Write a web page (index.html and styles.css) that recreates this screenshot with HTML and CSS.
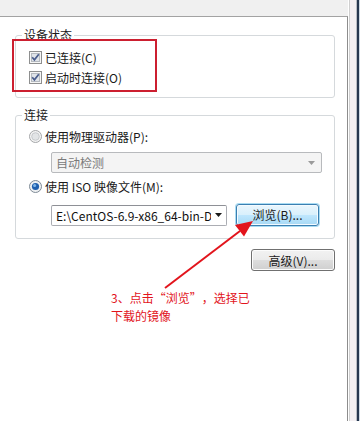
FILE: index.html
```html
<!DOCTYPE html>
<html lang="zh-CN">
<head>
  <meta charset="UTF-8">
  <meta name="viewport" content="width=device-width, initial-scale=1.0">
  <title>CD/DVD 设置</title>
  <link rel="stylesheet" href="styles.css">
</head>
<body>
  <div class="shell">
    <div class="main">
      <div class="top"></div>
      <div class="panel">
        <fieldset class="group group-state">
          <legend>设备状态</legend>
          <label class="opt">
            <svg class="box" width="13" height="13" viewBox="0 0 13 13"><rect x=".5" y=".5" width="12" height="12" fill="#f6f6f6" stroke="#8e8f8f"/><rect x="2.5" y="2.5" width="8" height="8" fill="#dfe3e8" stroke="#b4b9bf"/><path d="M3.2 6.2 L5.4 8.8 L9.8 3.2" fill="none" stroke="#4a5d8c" stroke-width="1.7"/></svg>
            已连接(C)
          </label>
          <label class="opt">
            <svg class="box" width="13" height="13" viewBox="0 0 13 13"><rect x=".5" y=".5" width="12" height="12" fill="#f6f6f6" stroke="#8e8f8f"/><rect x="2.5" y="2.5" width="8" height="8" fill="#dfe3e8" stroke="#b4b9bf"/><path d="M3.2 6.2 L5.4 8.8 L9.8 3.2" fill="none" stroke="#4a5d8c" stroke-width="1.7"/></svg>
            启动时连接(O)
          </label>
        </fieldset>

        <fieldset class="group group-conn">
          <legend>连接</legend>
          <label class="opt opt-radio">
            <svg class="box" width="13" height="13" viewBox="0 0 13 13"><circle cx="6.5" cy="6.5" r="6" fill="#f4f4f4" stroke="#a4a6a8"/><circle cx="6.5" cy="6.5" r="3.8" fill="#e2e4e6" stroke="#c6c9cc"/></svg>
            使用物理驱动器(P):
          </label>
          <div class="combo combo-off">
            <span class="combo-text">自动检测</span>
            <svg class="caret" width="7" height="4" viewBox="0 0 7 4"><path d="M0 0 H7 L3.5 4 Z" fill="#9a9a9a"/></svg>
          </div>
          <label class="opt opt-radio">
            <svg class="box" width="13" height="13" viewBox="0 0 13 13"><circle cx="6.5" cy="6.5" r="6" fill="#eef0f2" stroke="#7f8a96"/><circle cx="6.5" cy="6.5" r="3.6" fill="#1f5fae"/><circle cx="5.6" cy="5.6" r="1.5" fill="#7db6ea"/></svg>
            使用 ISO 映像文件(M):
          </label>
          <div class="file-row">
            <div class="combo combo-file">
              <span class="combo-text">E:\CentOS-6.9-x86_64-bin-DVD1.iso</span>
              <svg class="caret" width="7" height="4" viewBox="0 0 7 4"><path d="M0 0 H7 L3.5 4 Z" fill="#1a1a1a"/></svg>
            </div>
            <button class="btn btn-hot">浏览(B)...</button>
          </div>
        </fieldset>

        <div class="actions">
          <button class="btn">高级(V)...</button>
        </div>

        <!-- 标注 -->
        <div class="mark"></div>
        <svg class="pointer" width="110" height="90" viewBox="0 0 110 90">
          <line x1="15" y1="78" x2="90" y2="21" stroke="#e2141c" stroke-width="2"/>
          <path d="M103 11 L94 26.5 L85 15 Z" fill="#e2141c"/>
        </svg>
        <div class="note">3、点击<span class="q q-open">“</span>浏览<span class="q q-close">”</span>，选择已<br>下载的镜像</div>
      </div>
    </div>
    <div class="edge"></div>
  </div>
</body>
</html>
```

FILE: styles.css
```css
body {
  margin: 0;
  background: #ffffff;
  font-family: "Noto Sans CJK SC", "Noto Sans", sans-serif;
  font-size: 12px;
  color: #1a1a1a;
}

.shell {
  display: flex;
  width: 360px;
  height: 421px;
  overflow: hidden;
}

.main {
  width: 348px;
  display: flex;
  flex-direction: column;
}

.top {
  height: 16px;
  background: #f0f0f0;
}

.panel {
  position: relative;
  flex: 1;
  background: #ffffff;
  border-top: 1px solid #a3a3a3;
  border-right: 1px solid #8d8d8d;
}

.edge {
  width: 12px;
  background: linear-gradient(to right,
    #ffffff 0 1px,
    #cfcfcf 1px 2px,
    #f3eff2 2px 8px,
    #b9bcc4 8px 9px,
    #26374f 9px 11px,
    #cdd8e4 11px 12px);
}

.group {
  box-sizing: border-box;
  width: 320px;
  margin: 0 0 0 15px;
  border: 1px solid #d5d9dc;
  border-radius: 3px;
  min-width: 0;
}

.group legend {
  padding: 0 2px;
  line-height: 16px;
  color: #1a1a1a;
}

.group-state {
  margin-top: 10px;
  padding: 5px 0 9px 6px;
}

.group-conn {
  margin-top: 9px;
  padding: 5px 0 12px 6px;
}

.opt {
  display: flex;
  align-items: center;
  gap: 3px;
  height: 20px;
  margin-left: 7px;
  line-height: 20px;
  white-space: nowrap;
}

.opt .box {
  flex: none;
  margin-top: -2px;
}

.opt-radio {
  height: 18px;
  line-height: 18px;
}

.combo {
  box-sizing: border-box;
  display: flex;
  align-items: center;
  height: 21px;
  margin-left: 29px;
  padding: 0 6px 0 4px;
  border: 1px solid #abadb3;
  border-radius: 2px;
  background: #ffffff;
}

.combo-text {
  flex: 1;
  overflow: hidden;
  white-space: nowrap;
  line-height: 19px;
}

.combo .caret {
  flex: none;
  margin-left: 4px;
}

.combo-off {
  width: 271px;
  margin-top: 6px;
  margin-bottom: 5px;
  background: #f4f4f4;
  border-color: #b8babd;
  color: #7a7a7a;
}

.combo-file {
  width: 176px;
  border-top-color: #8e9096;
}

.combo-file .combo-text {
  width: 155px;
  flex: none;
  color: #111111;
  text-overflow: clip;
}

.file-row {
  display: flex;
  align-items: center;
  gap: 9px;
  height: 23px;
  margin-top: 7px;
}

.file-row .combo {
  margin-top: 1px;
}

.btn {
  box-sizing: border-box;
  width: 84px;
  height: 22px;
  padding: 0;
  font-family: inherit;
  font-size: 12px;
  color: #1a1a1a;
  border: 1px solid #707070;
  border-radius: 3px;
  background: linear-gradient(to bottom, #f2f2f2 0%, #ebebeb 48%, #dddddd 52%, #cfcfcf 100%);
  box-shadow: inset 0 0 0 1px #fcfcfc;
}

.btn-hot {
  width: 83px;
  border-color: #3c7fb1;
  background: linear-gradient(to bottom, #eaf6fd 0%, #d9f0fc 48%, #bee6fd 52%, #a7d9f5 100%);
  box-shadow: inset 0 0 0 1px #f4fbff, 0 0 0 1px #a9dcf3;
}

.actions {
  display: flex;
  justify-content: flex-end;
  margin: 10px 12px 0 0;
}

.mark {
  position: absolute;
  left: 12px;
  top: 22px;
  width: 145px;
  height: 53px;
  box-sizing: border-box;
  border: 2px solid #cc1f30;
}

.pointer {
  position: absolute;
  left: 150px;
  top: 193px;
}

.note {
  position: absolute;
  left: 111px;
  top: 272px;
  line-height: 18px;
  color: #e2141c;
  white-space: nowrap;
}

.note .q {
  display: inline-block;
  width: 12px;
}

.note .q-open {
  text-align: right;
}

.note .q-close {
  text-align: left;
}
```
